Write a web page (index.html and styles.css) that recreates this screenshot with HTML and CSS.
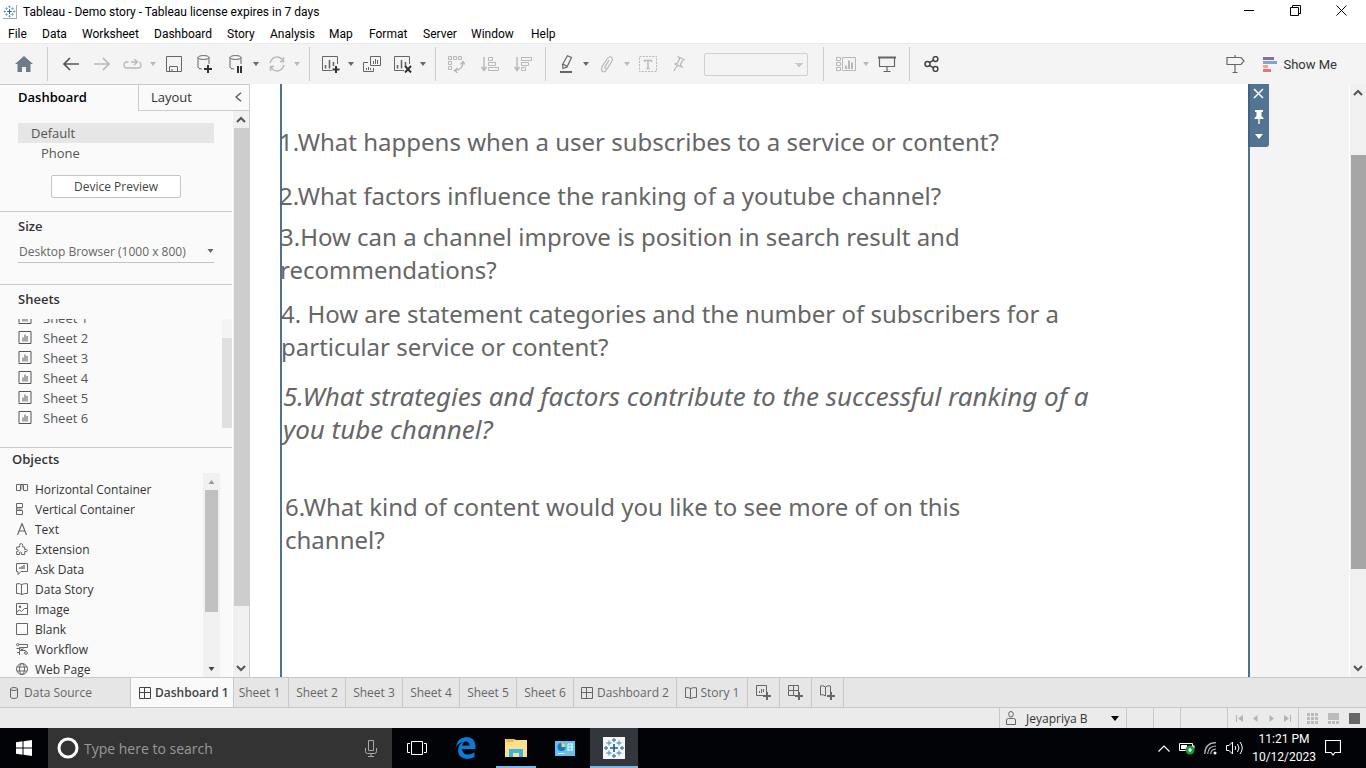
FILE: index.html
```html
<!DOCTYPE html>
<html lang="en">
<head>
<meta charset="utf-8">
<title>Tableau - Demo story</title>
<link rel="stylesheet" href="styles.css">
</head>
<body>
<svg class="sprite" aria-hidden="true">
  <symbol id="caret" viewBox="0 0 6 4"><path d="M0 0h6L3 4z" fill="currentColor"/></symbol>
  <symbol id="chev-up" viewBox="0 0 10 7"><path d="M1 6l4-4 4 4" fill="none" stroke="currentColor" stroke-width="2"/></symbol>
  <symbol id="chev-down" viewBox="0 0 10 7"><path d="M1 1l4 4 4-4" fill="none" stroke="currentColor" stroke-width="2"/></symbol>
  <symbol id="sheet" viewBox="0 0 14 14"><path d="M.5 .5h12v12H.5zM4.500 6.500v4M6.500 3.500v7M8.500 5v5.500" fill="none" stroke="currentColor"/></symbol>
  <symbol id="grid" viewBox="0 0 12 12"><path d="M.5 .5h11v11H.5zM5.500 .5v11M.5 5.500h11" fill="none" stroke="currentColor"/></symbol>
  <symbol id="book" viewBox="0 0 12 12"><path d="M.5 .8Q3.500 .2 5.500 1.500 8.500 .2 11.500 .8V10.500Q9 10 6 11.500 3 10 .5 10.500zM5.500 1.500v10" fill="none" stroke="currentColor"/></symbol>
  <symbol id="logo" viewBox="0 0 22 22"><g fill="none" stroke-width="1.300"><path d="M11 7v8M7 11h8" stroke="#1f5b85" stroke-width="1.600"/><path d="M11 1v4M9 3h4M11 17v4M9 19h4M1 11h4M3 9v4M17 11h4M19 9v4" stroke="#4c87ad"/><path d="M6 3.500v5M3.500 6h5M16 3.500v5M13.500 6h5M6 13.500v5M3.500 16h5M16 13.500v5M13.500 16h5" stroke="#65a3c6"/></g></symbol>
</svg>
<div class="app">
  <header class="titlebar">
    <svg class="app-logo"><use href="#logo"/></svg>
    <span class="app-title">Tableau - Demo story - Tableau license expires in 7 days</span>
    <div class="window-buttons">
      <button aria-label="Minimize"><svg width="11" height="11" viewBox="0 0 11 11"><path d="M0 5.500h10" stroke="#000"/></svg></button>
      <button aria-label="Restore"><svg width="11" height="11" viewBox="0 0 11 11"><path d="M.5 2.500h8v8h-8zM2.500 2.500v-2h8v8h-2" fill="none" stroke="#000"/></svg></button>
      <button aria-label="Close"><svg width="11" height="11" viewBox="0 0 11 11"><path d="M.5 .5l10 10M10.500 .5l-10 10" stroke="#000"/></svg></button>
    </div>
  </header>
  <nav class="menubar" aria-label="Main menu">
    <button>File</button><button>Data</button><button>Worksheet</button><button>Dashboard</button><button>Story</button><button>Analysis</button><button>Map</button><button>Format</button><button>Server</button><button>Window</button><button>Help</button>
  </nav>
  <div class="toolbar" role="toolbar" aria-label="Toolbar">
    <div class="group home-group">
      <button class="tool" aria-label="Start page"><svg width="18" height="16" viewBox="0 0 18 16"><path d="M9 0l9 8h-2.500v8h-4.500v-5H7v5H2.500V8H0z" fill="#6f7b88"/></svg></button>
    </div>
    <div class="group history-group">
      <button class="tool" aria-label="Undo"><svg width="18" height="14" viewBox="0 0 18 14"><path d="M8 1L2 7l6 6M2 7h15" fill="none" stroke="#555" stroke-width="1.700"/></svg></button>
      <button class="tool dim" aria-label="Redo"><svg width="18" height="14" viewBox="0 0 18 14"><path d="M10 1l6 6-6 6M16 7H1" fill="none" stroke="currentColor" stroke-width="1.700"/></svg></button>
      <button class="tool dim" aria-label="Replay"><svg width="20" height="12" viewBox="0 0 20 12"><path d="M5.500 4H4Q1 4 1 7t3 3h11q3 0 3-3 0-2-1.500-3M8 4h6M11 1l3.500 3L11 7" fill="none" stroke="currentColor" stroke-width="1.300"/></svg></button>
      <button class="drop dim" aria-label="Replay options"><svg><use href="#caret"/></svg></button>
      <button class="tool" aria-label="Save"><svg width="16" height="16" viewBox="0 0 16 16"><path d="M.5 .5h15v15H.5zM3.500 15.500v-5h8v5M6 13v2.500" fill="none" stroke="currentColor"/></svg></button>
      <button class="tool" aria-label="New data source"><svg width="16" height="18" viewBox="0 0 16 18"><path d="M6.500 .5Q12 .5 12 2.500T6.500 4.500 1 2.500 6.500 .5M1 2.500V12q0 2 4 2M12 2.500V9" fill="none" stroke="currentColor"/><path d="M11 10v8M7 14h8" stroke="#333" stroke-width="2"/></svg></button>
      <button class="tool" aria-label="Pause updates"><svg width="16" height="18" viewBox="0 0 16 18"><path d="M7.500 .5Q13 .5 13 2.500T7.500 4.500 2 2.500 7.500 .5M2 2.500V12q0 2 4 2M13 2.500V9" fill="none" stroke="currentColor"/><path d="M10 11v7M13 11v7" stroke="#333" stroke-width="2"/></svg></button>
      <button class="drop" aria-label="Pause options"><svg><use href="#caret"/></svg></button>
      <button class="tool dim" aria-label="Refresh"><svg width="18" height="16" viewBox="0 0 18 16"><path d="M2 7Q4 1 9 1q4 0 6 4M16 9q-2 6-7 6-4 0-6-4M15.500 1v4.500H12M2.500 15v-4.500H6" fill="none" stroke="currentColor" stroke-width="1.400"/></svg></button>
      <button class="drop dim" aria-label="Refresh options"><svg><use href="#caret"/></svg></button>
    </div>
    <div class="group sheet-group">
      <button class="tool" aria-label="New worksheet"><svg width="19" height="18" viewBox="0 0 19 18"><path d="M16.500 9V1.500h-15v14H11" fill="none" stroke="currentColor"/><path d="M4.500 10v3.500M8.500 5v8.500M12.500 7v4" stroke="currentColor" stroke-width="1.600"/><path d="M15 11v7M11.500 14.500h7" stroke="#333" stroke-width="2"/></svg></button>
      <button class="drop" aria-label="New options"><svg><use href="#caret"/></svg></button>
      <button class="tool" aria-label="Duplicate"><svg width="18" height="16" viewBox="0 0 18 16"><path d="M7.500 .5h10v9h-10zM10.500 5v3M12.500 3v5M14.500 4v4M5 6.500H.5v9h10V12M3.500 12v2M5.500 11v3M7.500 12v2" fill="none" stroke="currentColor"/></svg></button>
      <button class="tool" aria-label="Clear sheet"><svg width="19" height="18" viewBox="0 0 19 18"><path d="M16.500 9V1.500h-15v14H11" fill="none" stroke="currentColor"/><path d="M4.500 10v3.500M8.500 5v8.500M12.500 7v4" stroke="currentColor" stroke-width="1.600"/><path d="M12 11l6 6.500M18 11l-6 6.500" stroke="#333" stroke-width="2"/></svg></button>
      <button class="drop" aria-label="Clear options"><svg><use href="#caret"/></svg></button>
    </div>
    <div class="group sort-group dim">
      <button class="tool" aria-label="Swap rows and columns"><svg width="17" height="17" viewBox="0 0 17 17"><path d="M.5 .5h3v3h-3zM5.500 .5h3v3h-3zM10.500 .5h3v3h-3zM.5 5.500h3v3h-3zM.5 10.500h3v3h-3z" fill="none" stroke="currentColor"/><path d="M15 6.500q0 7-8 8M12.500 8.500l2.500-3 2 3M9.500 12l-3 2.500 3 2.500" fill="none" stroke="currentColor" stroke-width="1.300"/></svg></button>
      <button class="tool" aria-label="Sort ascending"><svg width="18" height="15" viewBox="0 0 18 15"><path d="M3 0v13M.5 10L3 13.500 5.500 10" fill="none" stroke="currentColor" stroke-width="1.400"/><path d="M7.500 .5h4v3h-4zM7.500 5.500h7v3h-7zM7.500 10.500h10v3h-10z" fill="none" stroke="currentColor"/></svg></button>
      <button class="tool" aria-label="Sort descending"><svg width="18" height="15" viewBox="0 0 18 15"><path d="M3 0v13M.5 10L3 13.500 5.500 10" fill="none" stroke="currentColor" stroke-width="1.400"/><path d="M7.500 .5h10v3h-10zM7.500 5.500h7v3h-7zM7.500 10.500h4v3h-4z" fill="none" stroke="currentColor"/></svg></button>
    </div>
    <div class="group format-group">
      <button class="tool" aria-label="Highlight"><svg width="14" height="18" viewBox="0 0 14 18"><path d="M8.500 .8l4 1.700L8 12l-4 1.500-.5-4zM4 9l4 2.500" fill="none" stroke="currentColor" stroke-width="1.200"/><path d="M1 17h12" stroke="currentColor" stroke-width="2"/></svg></button>
      <button class="drop" aria-label="Highlight options"><svg><use href="#caret"/></svg></button>
      <button class="tool dim" aria-label="Attach"><svg width="14" height="17" viewBox="0 0 14 17"><path d="M9 4L5 11q-.5 2 1 2t2-1.500L12 5q1-3-1-4T7 3L2.500 10q-2 4 0 5.500 2.500 1 4-1.500" fill="none" stroke="currentColor" stroke-width="1.200"/></svg></button>
      <button class="drop dim" aria-label="Attach options"><svg><use href="#caret"/></svg></button>
      <button class="tool dim" aria-label="Show labels"><svg width="18" height="16" viewBox="0 0 18 16"><path d="M.5 .5h17v15H.5z" fill="none" stroke="currentColor" stroke-dasharray="2 1.200"/><path d="M5.500 6V4.500h7V6M9 4.500v8M7.500 12.500h3" fill="none" stroke="currentColor" stroke-width="1.400"/></svg></button>
      <button class="tool dim" aria-label="Fix axes"><svg width="14" height="16" viewBox="0 0 14 16"><path d="M6.500 1l5.500 2.500-1.500 1-2 4 1.500 2.500L3 8l2.500-1 2-4.200zM5 9.500L2 15" fill="none" stroke="currentColor" stroke-width="1.200"/></svg></button>
      <select class="fit" aria-label="Fit" disabled><option></option></select>
    </div>
    <div class="group view-group">
      <button class="tool dim" aria-label="Show cards"><svg width="20" height="15" viewBox="0 0 20 15"><path d="M.5 .5h4v3h-4zM.5 5.500h4v3h-4zM.5 10.500h4v3h-4zM6.500 .5h13v13h-13z" fill="none" stroke="currentColor"/><path d="M10 8.500V12M13 3.500V12M16 5.500V12" stroke="currentColor" stroke-width="2"/></svg></button>
      <button class="drop dim" aria-label="Card options"><svg><use href="#caret"/></svg></button>
      <button class="tool" aria-label="Presentation mode"><svg width="18" height="16" viewBox="0 0 18 16"><path d="M0 1.500h18" stroke="currentColor" stroke-width="2"/><path d="M1.500 2v8.500h15V2M9 10.500v5M5.500 15.500h7" fill="none" stroke="currentColor" stroke-width="1.200"/></svg></button>
    </div>
    <div class="group share-group">
      <button class="tool" aria-label="Share"><svg width="15" height="16" viewBox="0 0 15 16"><g fill="none" stroke="#444" stroke-width="1.500"><circle cx="3.500" cy="8" r="2.500"/><circle cx="11.500" cy="3" r="2.400"/><circle cx="11.500" cy="13" r="2.400"/><path d="M5.500 6.700l4-2.500M5.500 9.300l4 2.500"/></g></svg></button>
    </div>
    <div class="group end-group">
      <button class="tool" aria-label="Guide"><svg width="19" height="18" viewBox="0 0 19 18"><path d="M1 2.500h14l3 3.500-3 3.500H1zM9 0v2.500M9 9.500V17M6.500 17.500h5" fill="none" stroke="currentColor" stroke-width="1.200"/></svg></button>
      <button class="show-me"><svg width="14" height="15" viewBox="0 0 14 15"><path d="M0 0h11v3H0z" fill="#8a6f9e"/><path d="M0 4h14v3H0z" fill="#7ea6d0"/><path d="M0 8h5v3H0z" fill="#f4a582"/><path d="M0 12h8v3H0z" fill="#f26d80"/></svg>Show Me</button>
    </div>
  </div>
  <div class="workspace">
    <aside class="sidebar">
      <div class="side-tabs" role="tablist">
        <button class="side-tab active" role="tab">Dashboard</button>
        <div class="side-tab-rest"><button class="side-tab" role="tab">Layout</button><button class="collapse" aria-label="Collapse"><svg width="7" height="10" viewBox="0 0 7 10"><path d="M6 .7L1 5l5 4.300" fill="none" stroke="currentColor" stroke-width="1.300"/></svg></button></div>
      </div>
      <div class="side-body">
        <div class="side-content">
          <section class="devices">
            <button class="device selected">Default</button>
            <button class="device nested">Phone</button>
            <button class="preview">Device Preview</button>
          </section>
          <section class="size">
            <h2><label for="size-select">Size</label></h2>
            <div class="size-field"><select id="size-select"><option>Desktop Browser (1000 x 800)</option></select><svg><use href="#caret"/></svg></div>
          </section>
          <section class="sheets">
            <h2>Sheets</h2>
            <div class="sheet-scroll">
              <ul class="sheet-list">
                <li><svg><use href="#sheet"/></svg>Sheet 1</li>
                <li><svg><use href="#sheet"/></svg>Sheet 2</li>
                <li><svg><use href="#sheet"/></svg>Sheet 3</li>
                <li><svg><use href="#sheet"/></svg>Sheet 4</li>
                <li><svg><use href="#sheet"/></svg>Sheet 5</li>
                <li><svg><use href="#sheet"/></svg>Sheet 6</li>
              </ul>
              <div class="mini-scroll"><div class="mini-thumb"></div></div>
            </div>
          </section>
          <section class="objects">
            <h2>Objects</h2>
            <div class="object-scroll">
              <ul class="object-list">
                <li><svg viewBox="0 0 12 12"><path d="M5 1.500h2v5H5z" fill="#bbb"/><path d="M.5 1.500h4v6h-4zM7.500 1.500h4v6h-4zM4.500 1.500h3" fill="none" stroke="currentColor"/></svg>Horizontal Container</li>
                <li><svg viewBox="0 0 12 12"><path d="M1 5h5v2H1z" fill="#bbb"/><path d="M.5 .5h6v4h-6zM.5 7.500h6v4h-6zM.5 4.500v3" fill="none" stroke="currentColor"/></svg>Vertical Container</li>
                <li><svg viewBox="0 0 12 12"><path d="M1.500 12L6 .5 10.500 12M3 8h6" fill="none" stroke="currentColor" stroke-width="1.200"/></svg>Text</li>
                <li><svg viewBox="0 0 12 12"><path d="M.7 4h3V2.500Q3.500 .6 5.200 .6T6.700 2.500V4h2v2.500q2.700-.8 2.700 1T8.700 8.500v3H5.500q.8-2.500-1-2.500t-1 2.500H.7V8.500q2 0 2-1t-2-1z" fill="none" stroke="currentColor"/></svg>Extension</li>
                <li><svg viewBox="0 0 12 12"><path d="M.5 .5h11v8H5l-3 3v-3H.5z" fill="none" stroke="currentColor"/><path d="M4 4v2M6 3v3M8 2v4" stroke="#999" stroke-width="2"/></svg>Ask Data</li>
                <li><svg><use href="#book"/></svg>Data Story</li>
                <li><svg viewBox="0 0 12 12"><path d="M.5 .5h11v11H.5zM.5 9l3-2 2 1.500 3-3h3" fill="none" stroke="currentColor"/><circle cx="4" cy="3.700" r="1.200" fill="currentColor"/></svg>Image</li>
                <li><svg viewBox="0 0 12 12"><path d="M.5 .5h11v11H.5z" fill="none" stroke="currentColor"/></svg>Blank</li>
                <li><svg viewBox="0 0 12 12"><g fill="none" stroke="currentColor"><circle cx="1.700" cy="1.700" r="1.200"/><path d="M3 1.500h8.500v3h-8v3h6M.5 5.500h3M1 9.500h3M3.500 8v4"/><circle cx="6" cy="5.500" r="1.200"/><circle cx="10" cy="10" r="1.400"/></g></svg>Workflow</li>
                <li><svg viewBox="0 0 12 12"><g fill="none" stroke="currentColor"><circle cx="6" cy="6" r="5.500"/><ellipse cx="6" cy="6" rx="2.500" ry="5.500"/><path d="M1 4h10M1 8h10"/></g></svg>Web Page</li>
              </ul>
              <div class="object-bar"><svg class="bar-up"><use href="#caret"/></svg><div class="object-thumb"></div><svg class="bar-down"><use href="#caret"/></svg></div>
            </div>
          </section>
        </div>
        <div class="scrollbar side-scroll"><svg><use href="#chev-up"/></svg><div class="thumb"></div><svg><use href="#chev-down"/></svg></div>
      </div>
    </aside>
    <main class="canvas">
      <div class="page">
        <div class="zone">
          <p class="question q1">1.What happens when a user subscribes to a service or content?</p>
          <p class="question q2">2.What factors influence the ranking of a youtube channel?</p>
          <p class="question q3">3.How can a channel improve is position in search result and<br>recommendations?</p>
          <p class="question q4">4. How are statement categories and the number of subscribers for a<br>particular service or content?</p>
          <p class="question q5">5.What strategies and factors contribute to the successful ranking of a<br>you tube channel?</p>
          <p class="question q6">6.What kind of content would you like to see more of on this<br>channel?</p>
          <div class="zone-tools">
            <button aria-label="Remove"><svg width="11" height="11" viewBox="0 0 11 11"><path d="M1 1l9 9M10 1l-9 9" stroke="#fff" stroke-width="1.500"/></svg></button>
            <button aria-label="Pin"><svg width="10" height="14" viewBox="0 0 10 14"><path d="M1 0h8v2H7.500v4L9.500 8v1H.5V8l2-2V2H1zM4.300 9h1.400v5H4.300z" fill="#fff"/></svg></button>
            <button aria-label="More options"><svg width="8" height="5"><path d="M0 0h8L4 5z" fill="#fff"/></svg></button>
          </div>
        </div>
      </div>
    </main>
    <div class="scrollbar main-scroll"><svg><use href="#chev-up"/></svg><div class="thumb"></div><svg><use href="#chev-down"/></svg></div>
  </div>
  <nav class="tabs" aria-label="Sheets">
    <button class="tab source"><svg viewBox="0 0 12 12"><path d="M6 .5q3.500 0 3.500 1.500T6 3.500 2.500 2 6 .5M2.500 2v8Q2.500 11.500 6 11.500T9.500 10V2" fill="none" stroke="currentColor"/></svg>Data Source</button>
    <button class="tab current"><svg><use href="#grid"/></svg>Dashboard 1</button>
    <button class="tab sheet-tab first">Sheet 1</button>
    <button class="tab sheet-tab">Sheet 2</button>
    <button class="tab sheet-tab">Sheet 3</button>
    <button class="tab sheet-tab">Sheet 4</button>
    <button class="tab sheet-tab">Sheet 5</button>
    <button class="tab sheet-tab">Sheet 6</button>
    <button class="tab dash-tab"><svg><use href="#grid"/></svg>Dashboard 2</button>
    <button class="tab story-tab"><svg><use href="#book"/></svg>Story 1</button>
    <button class="tab add-tab" aria-label="New worksheet"><svg viewBox="0 0 15 15"><path d="M10.500 7V.5H.5v10H7M3.500 6v2M5.500 4v4M7.500 4v3" fill="none" stroke="currentColor"/><path d="M11 7v8M7 11h8" stroke="currentColor" stroke-width="2"/></svg></button>
    <button class="tab add-tab" aria-label="New dashboard"><svg viewBox="0 0 15 15"><path d="M10.500 7V.5H.5v10H7M5.500 .5v10M.5 5.500h10" fill="none" stroke="currentColor"/><path d="M11 7v8M7 11h8" stroke="currentColor" stroke-width="2"/></svg></button>
    <button class="tab add-tab" aria-label="New story"><svg viewBox="0 0 15 15"><path d="M10.500 7V1Q8 0 5.500 2 3 0 .5 1v9Q3 9 5.500 11V2" fill="none" stroke="currentColor"/><path d="M11 7v8M7 11h8" stroke="currentColor" stroke-width="2"/></svg></button>
  </nav>
  <footer class="status">
    <button class="user"><svg width="10" height="14" viewBox="0 0 10 14"><path d="M5 .5q2.300 0 2.300 2.700T5 6 2.700 3.200 5 .5M.5 13.500V9q0-1.500 2-1.500h5q2 0 2 1.500v4.500z" fill="none" stroke="#666"/></svg><span>Jeyapriya B</span><svg class="user-caret" width="8" height="5"><path d="M0 0h8L4 5z"/></svg></button>
    <div class="slot short"></div><div class="slot short"></div><div class="slot long"></div>
    <div class="pager">
      <button aria-label="First"><svg viewBox="0 0 7 7"><path d="M0 0h1v7H0zM7 0v7L2 3.500z"/></svg></button>
      <button aria-label="Previous"><svg viewBox="0 0 7 7"><path d="M5.500 0v7L1 3.500z"/></svg></button>
      <button aria-label="Next"><svg viewBox="0 0 7 7"><path d="M1.500 0v7L6 3.500z"/></svg></button>
      <button aria-label="Last"><svg viewBox="0 0 7 7"><path d="M6 0h1v7H6zM0 0v7l5-3.500z"/></svg></button>
    </div>
    <div class="modes">
      <button aria-label="Sheet sorter"><svg width="11" height="11" viewBox="0 0 11 11"><path d="M0 0h3v3H0zM4 0h3v3H4zM8 0h3v3H8zM0 4h3v3H0zM4 4h3v3H4zM8 4h3v3H8zM0 8h3v3H0zM4 8h3v3H4zM8 8h3v3H8z" fill="#bbb"/></svg></button>
      <button aria-label="Filmstrip"><svg width="11" height="11" viewBox="0 0 11 11"><path d="M0 0h11v7H0zM0 8h3v3H0zM4 8h3v3H4zM8 8h3v3H8z" fill="#bbb"/></svg></button>
      <button aria-label="Tabs"><svg width="11" height="11"><path d="M0 0h11v11H0z" fill="#666"/></svg></button>
    </div>
  </footer>
  <div class="taskbar">
    <button class="start" aria-label="Start"><svg width="16" height="16" viewBox="0 0 16 16"><path d="M0 2.200L6.500 1.300v6.200H0zM7.500 1.200L16 0v7.500H7.500zM0 8.500h6.500v6.200L0 13.800zM7.500 8.500H16V16l-8.500-1.200z" fill="#fff"/></svg></button>
    <div class="search"><svg width="22" height="22" viewBox="0 0 22 22"><circle cx="11" cy="11" r="9" fill="none" stroke="#fff" stroke-width="3"/></svg><input type="search" aria-label="Search" placeholder="Type here to search"><svg width="12" height="17" viewBox="0 0 12 17"><path d="M3.500 .5h5v10h-5zM.5 8v3.500q0 2 2 2h7q2 0 2-2V8M6 13.500V16M3 16.500h6" fill="none" stroke="#aaa"/></svg></div>
    <button class="task" aria-label="Task view"><svg width="20" height="14" viewBox="0 0 20 14"><path d="M4.500 .5h11v13h-11zM3 2.500H.5v9H3M17 2.500h2.500v9H17" fill="none" stroke="#fff"/></svg></button>
    <button class="task" aria-label="Edge"><svg width="21" height="22" viewBox="0 0 21 22"><path d="M1 10Q2 1 11 0q9 0 9.500 9v3H7q.5 5.500 6 5.500 3.500 0 6.500-2v4.500q-4 2-8 2-8.500-1-8.500-9 .5-5.500 5-8Q3 6 1 10zM7.200 8.500h7.300q0-4-3.500-4-3 0-3.800 4z" fill="#0c7bd8"/></svg></button>
    <button class="task running" aria-label="File Explorer"><svg width="22" height="18" viewBox="0 0 22 18"><path d="M0 0h9l2 1h11v17H0z" fill="#ffe08a"/><path d="M1 0h8v3H1z" fill="#f3bd35"/><path d="M4 18v-8h14v8h-4v-4H8v4z" fill="#38b5e6"/></svg></button>
    <button class="task" aria-label="Control Panel"><svg width="20" height="15" viewBox="0 0 20 15"><path d="M0 0h20v15H0z" fill="#5cc3f5"/><circle cx="6.500" cy="6" r="4" fill="#1b73c4"/><path d="M6.500 6V2A4 4 0 0 1 10.500 6z" fill="#ffd34f"/><path d="M3 12.500h6M13 3h5M13 6h5M13 9h5M13 3v7M17 3v7" stroke="#eaf8ff"/><path d="M10 12.500h4" stroke="#ff9d2f"/></svg></button>
    <button class="task running focused" aria-label="Tableau"><svg width="22" height="22" viewBox="0 0 22 22"><path d="M0 0h22v22H0z" fill="#f5f5f5"/><use href="#logo" width="22" height="22"/></svg></button>
    <div class="tray">
      <button aria-label="Show hidden icons"><svg width="12" height="7" viewBox="0 0 12 7"><path d="M.5 6.500L6 1l5.500 5.500" fill="none" stroke="#fff" stroke-width="1.200"/></svg></button>
      <button aria-label="Battery"><svg width="16" height="13" viewBox="0 0 16 13"><path d="M.5 1.500h13v7H.5z" fill="none" stroke="#fff"/><path d="M2 3h6v4H2zM14 3.500h1.500v3H14z" fill="#fff"/><circle cx="11" cy="8" r="4.500" fill="#159a3c"/><path d="M11 5.500L13 8l-2 2.500L9 8z" fill="#dff5e3"/></svg></button>
      <button aria-label="Network"><svg width="13" height="13" viewBox="0 0 13 13"><g fill="none" stroke="#bbb" stroke-width="1.200"><path d="M.7 12Q1 1 12 .7M3.700 12Q4 4.300 12 4M6.700 12q.3-4.700 5.300-5"/></g><circle cx="11" cy="11" r="1.500" fill="#fff"/></svg></button>
      <button aria-label="Volume"><svg width="17" height="14" viewBox="0 0 17 14"><path d="M.5 4.500H3l3.500-3.500v12L3 9.500H.5zM9 5q1.500 2 0 4M11.500 3q3 4 0 8M14 1q4.500 6 0 12" fill="none" stroke="#fff"/></svg></button>
      <button class="clock"><span>11:21 PM</span><span>10/12/2023</span></button>
      <button aria-label="Notifications"><svg width="16" height="16" viewBox="0 0 16 16"><path d="M.5 .5h15v12H10l-2 2.500-2-2.500H.5z" fill="none" stroke="#fff" stroke-width="1.200"/></svg></button>
    </div>
  </div>
</div>
</body>
</html>
```
FILE: styles.css
```css
* { box-sizing: border-box; }
body { margin: 0; font-family: "Open Sans", "Noto Sans", sans-serif; font-size: 12px; color: #333; }
button, select, input { font: inherit; color: inherit; margin: 0; padding: 0; border: 0; background: none; border-radius: 0; }
svg { display: block; flex: none; }
h2, p, ul { margin: 0; padding: 0; }
ul { list-style: none; }
.sprite { position: absolute; width: 0; height: 0; }
.app { display: flex; flex-direction: column; height: 100vh; overflow: hidden; background: #fff; }

.titlebar { display: flex; align-items: center; height: 23px; padding-left: 3px; color: #000; font-family: Roboto, sans-serif; }
.app-logo { width: 14px; height: 14px; border-right: 1px solid #aaa; border-bottom: 1px solid #aaa; }
.app-title { margin-left: 6px; }
.window-buttons { display: flex; margin-left: auto; padding: 0 2px 2px 0; }
.window-buttons button { display: flex; justify-content: center; width: 46px; }

.menubar { display: grid; grid-template-columns: 34px 40px 72px 73px 43px 59px 40px 54px 48px 60px 40px; height: 20px; padding: 2px 0 0 8px; color: #000; font-family: Roboto, sans-serif; }
.menubar button { text-align: left; }

.toolbar { display: flex; height: 41px; padding: 3px 0; background: #f4f4f4; border-top: 1px solid #eaeaea; color: #666; }
.group { display: flex; align-items: center; border-right: 1px solid #ccc; padding: 0 7px 0 6px; }
.home-group { padding: 0 8px; }
.history-group { padding: 0 7px; }
.sheet-group, .sort-group { padding-left: 5px; }
.sort-group { gap: 2px; }
.format-group { padding: 0 15px 0 4px; }
.share-group, .end-group { border-right: 0; }
.end-group { margin-left: auto; padding-right: 29px; }
.tool { display: flex; justify-content: center; align-items: center; width: 31px; height: 32px; }
.drop { display: flex; justify-content: center; width: 10px; }
.drop svg { width: 6px; height: 4px; }
.dim { color: #b8b8b8; }
.fit { appearance: none; width: 104px; height: 23px; margin-left: 10px; border: 1px solid #d0d0d0; border-radius: 2px; background: conic-gradient(from -45deg at 50% 100%, #c8c8c8 0 90deg, transparent 0) 90px 9px / 8px 4px no-repeat; opacity: 1; }
.show-me { display: flex; align-items: center; gap: 6px; margin-left: 12px; font: 13px Roboto, sans-serif; color: #333; }

.workspace { display: flex; flex: 1; min-height: 0; }
.sidebar { display: flex; flex-direction: column; width: 250px; background: #fafafa; border-right: 1px solid #ccc; border-top: 1px solid #ccc; }
.side-tabs { display: flex; height: 26px; font-size: 13px; }
.side-tab { text-align: left; padding: 0 0 2px 12px; }
.side-tab.active { width: 138px; padding-left: 18px; font-weight: 600; color: #000; }
.side-tab-rest { display: flex; flex: 1; justify-content: space-between; border-left: 1px solid #ccc; border-bottom: 1px solid #ccc; }
.collapse { padding: 0 7px 2px; color: #555; }
.side-body { display: flex; flex: 1; min-height: 0; }
.side-content { display: flex; flex-direction: column; flex: 1; min-height: 0; overflow: hidden; border-right: 1px solid #fff; }
.side-content section { flex: none; border-bottom: 1px solid #ccc; }
.side-content h2 { font-size: 13px; line-height: 18px; font-weight: 600; padding-left: 18px; }
.devices { display: flex; flex-direction: column; padding: 12px 18px 13px; font-size: 13px; }
.device { height: 20px; padding-left: 13px; text-align: left; line-height: 20px; color: #555; }
.device.selected { background: #e6e6e6; }
.device.nested { padding-left: 23px; }
.preview { align-self: center; width: 130px; height: 23px; margin-top: 12px; border: 1px solid #c4c4c4; border-radius: 2px; background: #fff; font-size: 12px; line-height: 20px; color: #444; }
.size { padding: 5px 0 21px; }
.size-field { display: flex; align-items: center; height: 23px; margin: 5px 18px 0; border-bottom: 1px solid #c4c4c4; color: #666; }
.size-field select { appearance: none; flex: 1; padding-left: 1px; }
.size-field svg { width: 7px; height: 4px; }
.sheets { padding-top: 5px; }
.sheet-scroll { display: flex; justify-content: space-between; height: 109px; margin-top: 11px; margin-bottom: 19px; overflow: hidden; }
.sheet-list { margin-top: -11px; padding-left: 18px; font-size: 13px; color: #555; }
.sheet-list li { display: flex; align-items: center; gap: 10px; height: 20px; }
.sheet-list svg { width: 15px; height: 14px; }
.mini-scroll { width: 10px; padding-top: 19px; background: #f4f4f4; }
.mini-thumb { height: 90px; background: #e0e0e0; }
.side-content .objects { display: flex; flex-direction: column; flex: 1; min-height: 0; border-bottom: 0; padding-top: 2px; }
.objects h2 { padding-left: 12px; }
.object-scroll { display: flex; justify-content: space-between; flex: 1; min-height: 0; margin-top: 5px; padding-right: 12px; overflow: hidden; }
.object-list { padding: 6px 0 0 16px; font-size: 12px; }
.object-list li { display: flex; align-items: center; gap: 7px; height: 20px; }
.object-list svg { width: 12px; height: 12px; color: #666; }
.object-bar { display: flex; flex-direction: column; align-items: center; width: 17px; padding: 7px 0 6px; background: #f1f1f1; }
.object-bar svg { width: 7px; height: 4px; }
.bar-up { rotate: 180deg; color: #999; }
.bar-down { margin-top: auto; color: #444; }
.object-thumb { width: 13px; height: 64%; margin-top: 6px; background: #c1c1c1; }
.scrollbar { display: flex; flex-direction: column; align-items: center; width: 16px; background: #f0f0f0; color: #555; padding: 5px 0; }
.scrollbar svg { width: 10px; height: 7px; }
.scrollbar svg:last-child { margin-top: auto; }
.thumb { width: 15px; background: #cdcdcd; }
.side-scroll .thumb { height: 86%; margin-top: 5px; }
.main-scroll .thumb { height: 71%; margin-top: 59px; background: #a6a6a6; }

.canvas { flex: 1; min-width: 0; overflow: hidden; background: #f4f4f4; padding-right: 99px; border-right: 1px solid #fff; }
.page { height: 100%; background: #fff; padding-left: 30px; }
.zone { position: relative; height: 100%; border-left: 2px solid #4f7192; border-right: 2px solid #4f7192; padding-top: 41px; font-family: "Noto Sans", sans-serif; }
.zone-tools { position: absolute; top: 0; left: 100%; display: flex; flex-direction: column; align-items: center; justify-content: space-between; width: 21px; height: 63px; padding: 4px 2px 8px 0; background: #537393; border-left: 2px solid #3f6287; border-radius: 0 0 3px 0; }
.question { font-size: 24px; line-height: 33px; color: #666; white-space: nowrap; margin-left: -3px; }
.q2 { margin-top: 21px; }
.q3 { margin-top: 8px; margin-left: -2px; }
.q4 { margin-top: 11px; margin-left: -1px; }
.q5 { margin-top: 17px; margin-left: 1px; font-size: 26px; font-style: italic; }
.q6 { margin-top: 44px; margin-left: 3px; }

.tabs { display: flex; height: 31px; background: #e6e6e6; border-top: 1px solid #c8c8c8; border-bottom: 1px solid #c8c8c8; color: #666; }
.tab { display: flex; align-items: center; gap: 4px; border-right: 1px solid #c8c8c8; white-space: nowrap; }
.tab svg { width: 12px; height: 12px; }
.source { width: 131px; padding-left: 8px; }
.current { width: 103px; padding-left: 8px; background: #fafafa; font-weight: 600; color: #444; }
.sheet-tab { justify-content: center; width: 57px; }
.sheet-tab.first { width: 55px; padding-right: 3px; }
.dash-tab { justify-content: center; width: 103px; }
.story-tab { justify-content: center; width: 71px; }
.add-tab { justify-content: center; width: 32px; }
.add-tab svg { width: 15px; height: 15px; }

.status { display: flex; justify-content: flex-end; height: 20px; background: #ebebeb; }
.status > * { display: flex; align-items: center; border-left: 1px solid #c8c8c8; }
.user { width: 127px; padding: 0 7px 0 6px; color: #333; font-size: 12px; }
.user span { margin-left: 10px; }
.user-caret { margin-left: auto; }
.slot.short { width: 27px; }
.slot.long { width: 47px; }
.pager { width: 71px; padding-left: 8px; gap: 9px; fill: #b4b4b4; }
.pager svg { width: 7px; height: 7px; }
.modes { width: 68px; padding-left: 8px; gap: 10px; }

.taskbar { display: flex; height: 40px; background: #020307; color: #fff; }
.start { display: flex; align-items: center; justify-content: center; width: 48px; }
.search { display: flex; align-items: center; width: 344px; padding: 0 15px 0 9px; background: #333; }
.search input { flex: 1; min-width: 0; margin-left: 5px; font-size: 14px; outline: 0; }
.search input::placeholder { color: #999; }
.task { display: flex; align-items: center; justify-content: center; width: 49px; }
.task.running { width: 40px; margin: 0 4px 0 6px; border-top: 2px solid transparent; border-bottom: 2px solid #76b9ed; }
.task.focused { width: 48px; margin: 0 0 0 1px; background: #33363c; }
.tray { display: flex; align-items: center; gap: 9px; margin-left: auto; padding-right: 25px; }
.clock { display: flex; flex-direction: column; align-items: center; line-height: 18px; font-family: Roboto, sans-serif; }
```
